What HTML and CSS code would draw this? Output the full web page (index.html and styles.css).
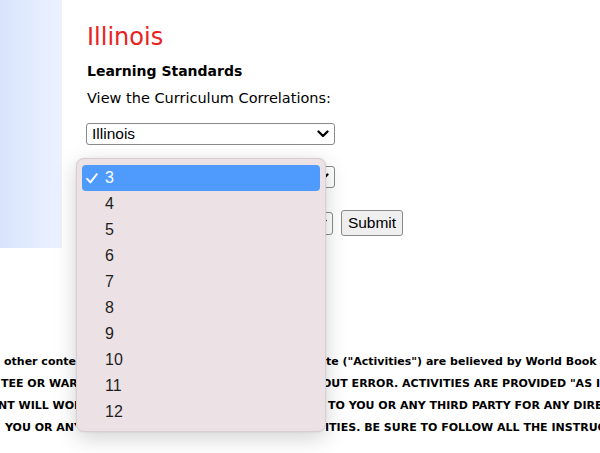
FILE: index.html
```html
<!DOCTYPE html>
<html>
<head>
<meta charset="utf-8">
<link rel="stylesheet" href="styles.css">
</head>
<body>
<div class="page">
  <div class="top">
    <div class="sidebar"></div>
    <div class="main">
      <h1 class="title">Illinois</h1>
      <h2 class="subtitle">Learning Standards</h2>
      <p class="intro">View the Curriculum Correlations:</p>
      <div class="select select-state">
        <span class="select-text">Illinois</span>
        <svg class="chev" width="12" height="8" viewBox="0 0 12 8"><path d="M1.5 1.5 L6 6 L10.5 1.5" fill="none" stroke="#000" stroke-width="2.3" stroke-linecap="round" stroke-linejoin="round"/></svg>
      </div>
      <div class="select select-grade">
        <span class="select-text"></span>
        <svg class="chev" width="12" height="8" viewBox="0 0 12 8"><path d="M1.5 1.5 L6 6 L10.5 1.5" fill="none" stroke="#000" stroke-width="2.3" stroke-linecap="round" stroke-linejoin="round"/></svg>
      </div>
      <div class="row">
        <div class="select select-subject">
          <span class="select-text"></span>
          <svg class="chev" width="12" height="8" viewBox="0 0 12 8"><path d="M1.5 1.5 L6 6 L10.5 1.5" fill="none" stroke="#000" stroke-width="2.3" stroke-linecap="round" stroke-linejoin="round"/></svg>
        </div>
        <button class="submit">Submit</button>
      </div>
    </div>
  </div>
  <div class="disclaimer">
    <div class="line">
      <div class="seg left l1">other conten</div>
      <div class="gap"></div>
      <div class="seg right r1">te ("Activities") are believed by World Book to be accurate</div>
    </div>
    <div class="line">
      <div class="seg left l2">TEE OR WARR</div>
      <div class="gap"></div>
      <div class="seg right r2">OUT ERROR. ACTIVITIES ARE PROVIDED "AS IS"</div>
    </div>
    <div class="line">
      <div class="seg left l3">NT WILL WOR</div>
      <div class="gap"></div>
      <div class="seg right r3">TO YOU OR ANY THIRD PARTY FOR ANY DIRECT</div>
    </div>
    <div class="line">
      <div class="seg left l4">YOU OR ANY</div>
      <div class="gap"></div>
      <div class="seg right r4">ITIES. BE SURE TO FOLLOW ALL THE INSTRUCTIONS</div>
    </div>
  </div>

  <div class="popup">
    <div class="opt selected">
      <svg class="check" width="12" height="11" viewBox="0 0 12 11"><path d="M1.2 5.8 L4.4 9.4 L10.8 1.2" fill="none" stroke="#fff" stroke-width="1.9" stroke-linecap="round" stroke-linejoin="round"/></svg>
      <span>3</span>
    </div>
    <div class="opt"><span>4</span></div>
    <div class="opt"><span>5</span></div>
    <div class="opt"><span>6</span></div>
    <div class="opt"><span>7</span></div>
    <div class="opt"><span>8</span></div>
    <div class="opt"><span>9</span></div>
    <div class="opt"><span>10</span></div>
    <div class="opt"><span>11</span></div>
    <div class="opt"><span>12</span></div>
  </div>
</div>
</body>
</html>
```

FILE: styles.css
```css
html, body {
  margin: 0;
  padding: 0;
  background: #fff;
}
body {
  width: 600px;
  height: 453px;
  overflow: hidden;
  font-family: "DejaVu Sans", Verdana, sans-serif;
  color: #000;
}
.page {
  position: relative;
  width: 600px;
  height: 453px;
}
.top {
  display: flex;
}
.sidebar {
  width: 62px;
  height: 248px;
  flex: none;
  background: linear-gradient(to right, #d8e4fd, #edf2ff);
}
.main {
  padding-left: 25px;
  padding-top: 23px;
  display: flex;
  flex-direction: column;
}
.title {
  margin: 0;
  font-weight: normal;
  font-size: 24px;
  line-height: 28px;
  color: #e8231f;
}
.subtitle {
  margin: 11px 0 0;
  font-size: 14px;
  line-height: 18px;
  font-weight: bold;
}
.intro {
  margin: 9px 0 0;
  font-size: 14.5px;
  line-height: 18px;
}
.select {
  box-sizing: border-box;
  height: 22px;
  border: 1px solid #8a8a8a;
  border-radius: 3px;
  background: #fff;
  display: flex;
  align-items: center;
  justify-content: space-between;
  padding: 0 5px 0 5px;
  font-family: "Liberation Sans", Arial, sans-serif;
  font-size: 15.5px;
}
.chev {
  flex: none;
}
.select-state {
  width: 249px;
  margin-top: 16px;
  margin-left: -1px;
}
.select-grade {
  width: 249px;
  margin-top: 21px;
  margin-left: -1px;
}
.row {
  display: flex;
  align-items: center;
  margin-top: 22px;
  margin-left: -1px;
  gap: 8px;
}
.select-subject {
  width: 247px;
  height: 23px;
}
.submit {
  box-sizing: border-box;
  height: 26px;
  width: 62px;
  padding: 0;
  border: 1px solid #8a8a8a;
  border-radius: 3px;
  background: #efefef;
  font-family: "Liberation Sans", Arial, sans-serif;
  font-size: 15.5px;
  color: #000;
}
.disclaimer {
  margin-top: 103px;
  font-size: 11px;
  font-weight: bold;
  line-height: 22px;
}
.line {
  display: flex;
  white-space: nowrap;
}
.seg {
  overflow: hidden;
}
.left {
  width: 76px;
  flex: none;
}
.gap {
  width: 250px;
  flex: none;
}
.right {
  flex: 1;
}
.l1 { padding-left: 4px; width: 72px; }
.l2 { padding-left: 1px; width: 75px; }
.l3 { text-indent: -2px; }
.l4 { padding-left: 5px; width: 71px; }
.r1 { text-indent: 0; }
.r2 { text-indent: -4px; }
.r3 { padding-left: 2px; }
.r4 { text-indent: -1px; }

.popup {
  position: absolute;
  left: 76px;
  top: 158px;
  width: 250px;
  height: 274px;
  box-sizing: border-box;
  padding: 6px 5px;
  background: #ece2e5;
  border: 1px solid #d7cfd2;
  border-radius: 8px;
  box-shadow: 0 6px 22px rgba(0, 0, 0, 0.18), 0 0 2px rgba(0, 0, 0, 0.1);
  font-family: "Liberation Sans", Arial, sans-serif;
  font-size: 16px;
  color: #1e1e1e;
}
.opt {
  height: 26px;
  display: flex;
  align-items: center;
  padding-left: 23px;
  border-radius: 4px;
  position: relative;
}
.opt.selected {
  background: #4f9afd;
  color: #fff;
  height: 26px;
}
.check {
  position: absolute;
  left: 4px;
  top: 8px;
}
```
